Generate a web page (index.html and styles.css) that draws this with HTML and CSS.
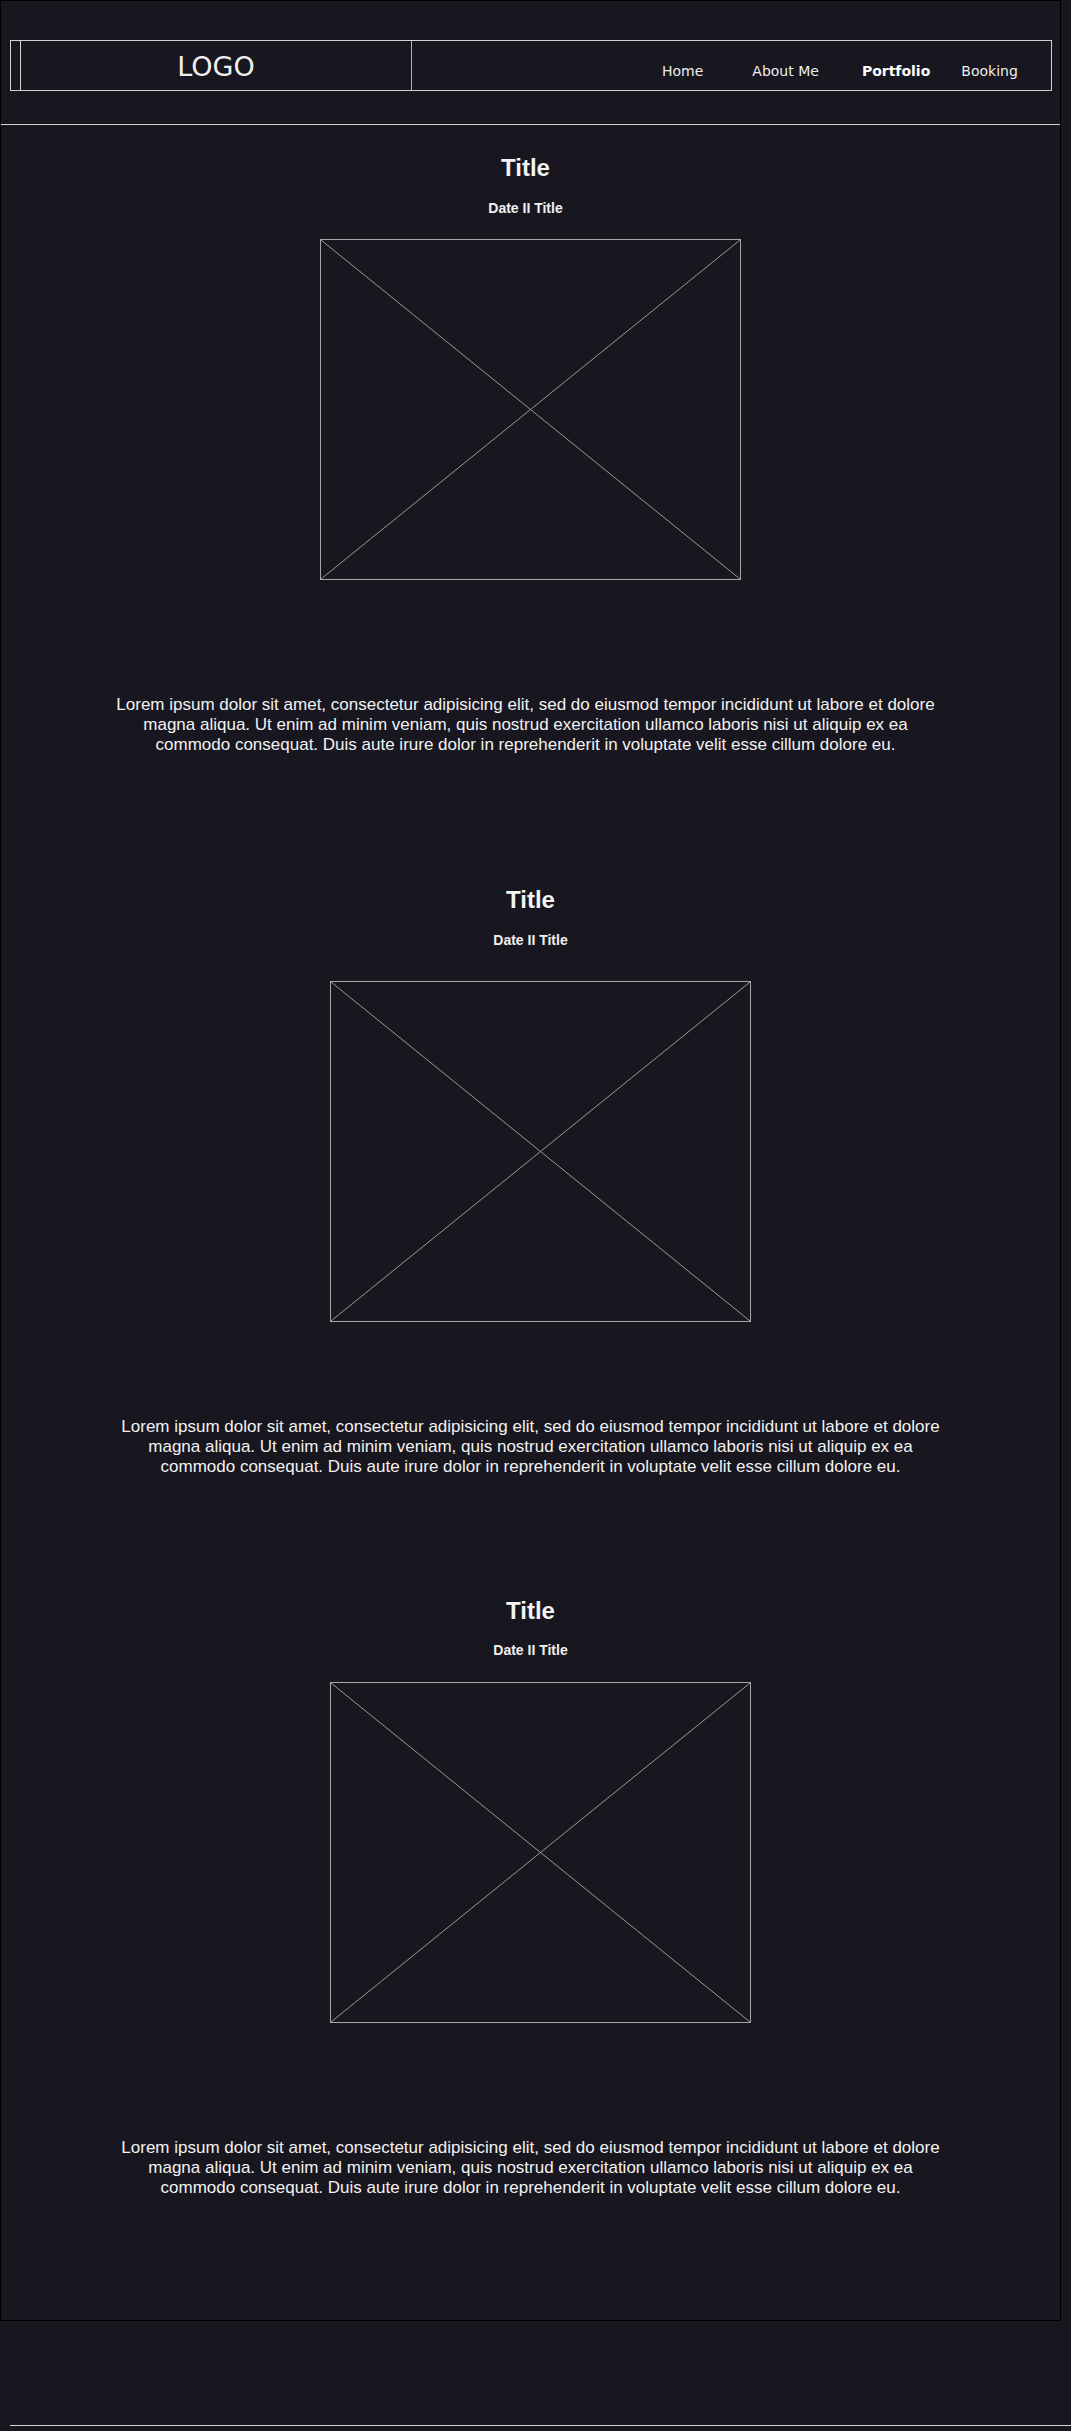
FILE: index.html
```html
<!DOCTYPE html>
<html lang="en">
<head>
<meta charset="utf-8">
<title>Portfolio</title>
<link rel="stylesheet" href="styles.css">
</head>
<body>
<div class="frame">
  <header class="header-box">
    <div class="logo-box"><span class="logo">LOGO</span></div>
    <nav class="nav">
      <a class="nav-link nav-link--home" href="#">Home</a>
      <a class="nav-link nav-link--about" href="#">About Me</a>
      <a class="nav-link nav-link--active" href="#">Portfolio</a>
      <a class="nav-link nav-link--booking" href="#">Booking</a>
    </nav>
  </header>
  <div class="rule"></div>

  <section class="post post--one">
    <h2 class="post-title">Title</h2>
    <p class="post-meta">Date II Title</p>
    <div class="post-figure">
      <div class="placeholder">
        <svg class="placeholder-x" viewBox="0 0 420 340" preserveAspectRatio="none"><line x1="0" y1="0" x2="420" y2="340"/><line x1="0" y1="340" x2="420" y2="0"/></svg>
      </div>
    </div>
    <p class="post-text">Lorem ipsum dolor sit amet, consectetur adipisicing elit, sed do eiusmod tempor incididunt ut labore et dolore magna aliqua. Ut enim ad minim veniam, quis nostrud exercitation ullamco laboris nisi ut aliquip ex ea commodo consequat. Duis aute irure dolor in reprehenderit in voluptate velit esse cillum dolore eu.</p>
  </section>

  <section class="post post--two">
    <h2 class="post-title">Title</h2>
    <p class="post-meta">Date II Title</p>
    <div class="post-figure">
      <div class="placeholder">
        <svg class="placeholder-x" viewBox="0 0 420 340" preserveAspectRatio="none"><line x1="0" y1="0" x2="420" y2="340"/><line x1="0" y1="340" x2="420" y2="0"/></svg>
      </div>
    </div>
    <p class="post-text">Lorem ipsum dolor sit amet, consectetur adipisicing elit, sed do eiusmod tempor incididunt ut labore et dolore magna aliqua. Ut enim ad minim veniam, quis nostrud exercitation ullamco laboris nisi ut aliquip ex ea commodo consequat. Duis aute irure dolor in reprehenderit in voluptate velit esse cillum dolore eu.</p>
  </section>

  <section class="post post--three">
    <h2 class="post-title">Title</h2>
    <p class="post-meta">Date II Title</p>
    <div class="post-figure">
      <div class="placeholder">
        <svg class="placeholder-x" viewBox="0 0 420 340" preserveAspectRatio="none"><line x1="0" y1="0" x2="420" y2="340"/><line x1="0" y1="340" x2="420" y2="0"/></svg>
      </div>
    </div>
    <p class="post-text">Lorem ipsum dolor sit amet, consectetur adipisicing elit, sed do eiusmod tempor incididunt ut labore et dolore magna aliqua. Ut enim ad minim veniam, quis nostrud exercitation ullamco laboris nisi ut aliquip ex ea commodo consequat. Duis aute irure dolor in reprehenderit in voluptate velit esse cillum dolore eu.</p>
  </section>
</div>
<div class="footer-line"></div>
</body>
</html>
```
FILE: styles.css
```css
html, body {
  margin: 0;
  padding: 0;
  background: #18161f;
}

body {
  font-family: "Liberation Sans", Arial, sans-serif;
  color: #f2f2f2;
  height: 2431px;
  overflow: hidden;
}

.frame {
  box-sizing: border-box;
  width: 1061px;
  height: 2321px;
  border: 1px solid #000;
  padding-top: 39px;
}

.header-box {
  box-sizing: border-box;
  margin-left: 9px;
  width: 1042px;
  height: 51px;
  border: 1px solid #d2d2d2;
  display: flex;
  align-items: stretch;
}

.logo-box {
  box-sizing: border-box;
  margin-left: 9px;
  width: 392px;
  border-left: 1px solid #d2d2d2;
  border-right: 1px solid #b4b4b4;
  display: flex;
  align-items: center;
  justify-content: center;
}

.logo {
  font-family: "DejaVu Sans", Verdana, sans-serif;
  font-size: 27px;
  line-height: 30px;
  color: #f0f0f0;
  padding-top: 2px;
}

.nav {
  display: flex;
  align-items: center;
  margin-left: 250px;
  padding-top: 11px;
}

.nav-link {
  font-family: "DejaVu Sans", Verdana, sans-serif;
  font-size: 14px;
  color: #eeeeee;
  text-decoration: none;
}

.nav-link--about {
  margin-left: 49px;
}

.nav-link--active {
  margin-left: 43px;
  font-weight: bold;
  color: #ffffff;
}

.nav-link--booking {
  margin-left: 31px;
}

.rule {
  margin-top: 33px;
  height: 0;
  border-top: 1px solid #d2d2d2;
}

.post {
  text-align: center;
}

.post--one {
  margin-top: 29px;
  padding-right: 10px;
}

.post--two {
  margin-top: 131px;
}

.post--three {
  margin-top: 120px;
}

.post-title {
  margin: 0;
  font-size: 24px;
  line-height: 28px;
  font-weight: bold;
  color: #f4f4f4;
}

.post-meta {
  margin: 18px 0 0;
  font-size: 14px;
  line-height: 16px;
  font-weight: bold;
  color: #f0f0f0;
}

.post--three .post-meta {
  margin-top: 17px;
}

.post-figure {
  margin-top: 23px;
  padding-left: 10px;
}

.post--two .post-figure {
  margin-top: 33px;
  padding-left: 20px;
}

.post--three .post-figure {
  margin-top: 24px;
  padding-left: 20px;
}

.placeholder {
  box-sizing: border-box;
  width: 421px;
  height: 341px;
  margin: 0 auto;
  border: 1px solid #a6a6a6;
}

.placeholder-x {
  display: block;
  width: 100%;
  height: 100%;
}

.placeholder-x line {
  stroke: #9a9a9a;
  stroke-width: 1;
  vector-effect: non-scaling-stroke;
}

.post-text {
  width: 832px;
  margin: 115px auto 0;
  font-size: 17px;
  line-height: 20px;
  color: #f2f2f2;
}

.post--two .post-text {
  margin-top: 95px;
}

.footer-line {
  margin-top: 104px;
  margin-left: 10px;
  height: 0;
  border-top: 1px solid #d2d2d2;
}
```
